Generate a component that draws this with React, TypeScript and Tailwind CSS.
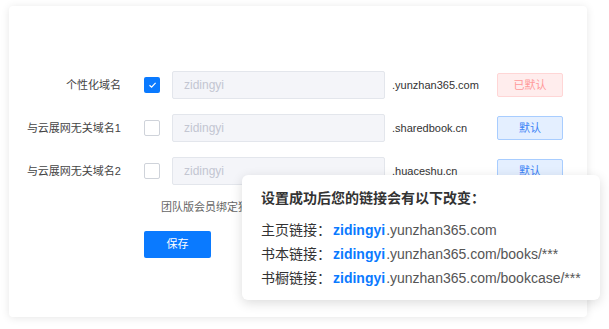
import React from "react";

const font = { fontFamily: '"Liberation Sans", "Noto Sans CJK SC", Arial, sans-serif' };

function Row({
  label,
  checked,
  domain,
  isDefault,
}: {
  label: string;
  checked: boolean;
  domain: string;
  isDefault: boolean;
}) {
  return (
    <div className="flex items-center h-[28px]">
      <div className="w-[112px] text-right text-[11px] text-[#444] leading-none">{label}</div>
      <div
        className={
          checked
            ? "ml-[23px] w-[16px] h-[16px] rounded-[2px] bg-[#0a7aff] flex items-center justify-center"
            : "ml-[23px] w-[16px] h-[16px] rounded-[2px] bg-white border border-[#cfd3da]"
        }
      >
        {checked && (
          <svg width="9" height="8" viewBox="0 0 9 8">
            <path d="M1.5 4.2 L3.6 6.2 L7.6 1.8" fill="none" stroke="#fff" strokeWidth="1.2" />
          </svg>
        )}
      </div>
      <div className="ml-[12px] w-[213px] h-[28px] bg-[#f4f5f9] border border-[#e3e6ec] rounded-[2px] flex items-center pl-[11px] text-[12px] text-[#c3c6d2]">
        zidingyi
      </div>
      <div className="ml-[7px] w-[105px] text-[11px] text-[#333]">{domain}</div>
      {isDefault ? (
        <div className="w-[66px] h-[24px] bg-[#ffeded] border border-[#ffd6d6] rounded-[2px] flex items-center justify-center text-[11px] text-[#ff9a9a]">
          已默认
        </div>
      ) : (
        <div className="w-[66px] h-[24px] bg-[#e4efff] border border-[#a8cdff] rounded-[2px] flex items-center justify-center text-[11px] text-[#3c82f6]">
          默认
        </div>
      )}
    </div>
  );
}

export default function App() {
  return (
    <div className="relative w-[609px] h-[329px] bg-white overflow-hidden" style={font}>
      <div className="ml-[9px] mt-[6px] w-[578px] h-[311px] bg-white rounded-[4px] shadow-[0_1px_8px_rgba(0,0,0,0.10)] pt-[65px]">
        <div className="flex flex-col gap-[15px]">
          <Row label="个性化域名" checked domain=".yunzhan365.com" isDefault />
          <Row label="与云展网无关域名1" checked={false} domain=".sharedbook.cn" isDefault={false} />
          <Row label="与云展网无关域名2" checked={false} domain=".huaceshu.cn" isDefault={false} />
        </div>
        <div className="ml-[152px] mt-[15px] w-[81px] overflow-hidden text-[11px] leading-[15px] text-[#666] whitespace-nowrap">
          团队版会员绑定独立域名
        </div>
        <div className="ml-[135px] mt-[16px] w-[67px] h-[27px] bg-[#0a7aff] rounded-[2px] flex items-center justify-center text-[11px] text-white">
          保存
        </div>
      </div>

      <div className="absolute left-[242px] top-[175px] w-[358px] h-[125px] bg-white rounded-[6px] shadow-[0_3px_12px_rgba(0,0,0,0.14)] pl-[19px] pt-[14px]">
        <div className="text-[14px] leading-[18px] font-bold text-[#333]">设置成功后您的链接会有以下改变：</div>
        <div className="mt-[11px] flex flex-col">
          {[
            ["主页链接：", ".yunzhan365.com"],
            ["书本链接：", ".yunzhan365.com/books/***"],
            ["书橱链接：", ".yunzhan365.com/bookcase/***"],
          ].map(([l, r]) => (
            <div key={l} className="flex items-center h-[24px] text-[14px] whitespace-nowrap">
              <span className="w-[72px] text-[#333]">{l}</span>
              <span className="font-bold text-[#0a7aff]">zidingyi</span>
              <span className="ml-[1px] text-[#555]">{r}</span>
            </div>
          ))}
        </div>
      </div>
    </div>
  );
}
